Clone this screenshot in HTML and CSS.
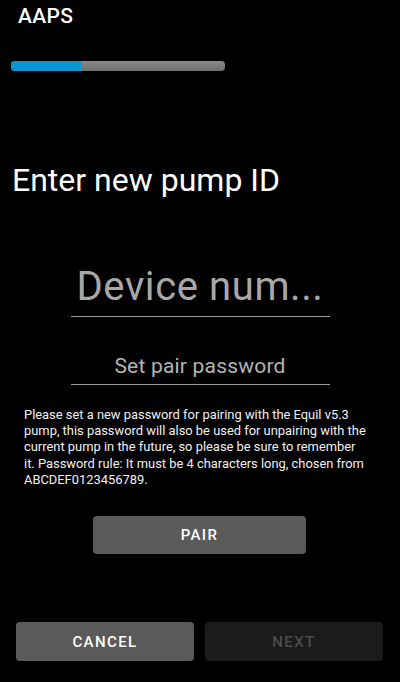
FILE: index.html
```html
<!DOCTYPE html>
<html>
<head>
<meta charset="utf-8">
<link rel="stylesheet" href="styles.css">
</head>
<body>
<div class="screen">
  <header class="appbar">AAPS</header>
  <div class="progress"><div class="progress-fill" style="width:33%"></div></div>
  <h1 class="title">Enter new pump ID</h1>
  <div class="field field-id"><span>Device num...</span></div>
  <div class="field field-pass"><span>Set pair password</span></div>
  <p class="hint">Please set a new password for pairing with the Equil v5.3 pump, this password will also be used for unpairing with the current pump in the future, so please be sure to remember it. Password rule: It must be 4 characters long, chosen from ABCDEF0123456789.</p>
  <div class="pair-row"><button class="btn btn-pair">PAIR</button></div>
  <div class="footer">
    <button class="btn btn-cancel">CANCEL</button>
    <button class="btn btn-next">NEXT</button>
  </div>
</div>
</body>
</html>
```
FILE: styles.css
```css
html, body {
  margin: 0;
  padding: 0;
  background: #000;
}
.screen {
  width: 400px;
  height: 682px;
  display: flex;
  flex-direction: column;
  font-family: Roboto, "Noto Sans", sans-serif;
  color: #fff;
}
.appbar {
  font-size: 21px;
  line-height: 24px;
  padding: 4px 0 0 18px;
  height: 28px;
  box-sizing: border-box;
  font-weight: 500;
  letter-spacing: 0.3px;
}
.progress {
  margin: 33px 0 0 11px;
  width: 214px;
  height: 10px;
  border-radius: 4px;
  background: linear-gradient(#8a8a8a, #6e6e6e);
  overflow: hidden;
}
.progress-fill {
  height: 100%;
  background: #0798d3;
}
.title {
  margin: 91px 0 0 12px;
  font-size: 32px;
  line-height: 36px;
  font-weight: 400;
}
.field {
  margin: 0 auto;
  width: 259px;
  border-bottom: 1px solid #9a9a9a;
  text-align: center;
  color: #a8a8a8;
}
.field-id {
  margin-top: 65px;
  font-size: 40px;
  line-height: 48px;
  padding-bottom: 5px;
  letter-spacing: 0.6px;
}
.field-pass {
  margin-top: 36px;
  font-size: 21px;
  line-height: 26px;
  padding-bottom: 5px;
  color: #b4b4b4;
  letter-spacing: 0.2px;
}
.hint {
  margin: 22px 31px 0 24px;
  font-size: 12.9px;
  line-height: 16.2px;
  color: #f0f0f0;
}
.pair-row {
  margin-top: 28px;
  display: flex;
  justify-content: center;
}
.btn {
  border: none;
  border-radius: 4px;
  font-family: Roboto, "Noto Sans", sans-serif;
  font-weight: 500;
  font-size: 15px;
  letter-spacing: 1.4px;
  color: #fff;
  padding: 0;
}
.btn-pair {
  width: 213px;
  height: 38px;
  background: #5a5a5a;
  margin-left: -1px;
}
.footer {
  margin-top: auto;
  padding: 0 17px 21px 16px;
  display: flex;
  gap: 11px;
}
.footer .btn {
  flex: 1;
  height: 39px;
}
.btn-cancel {
  background: #5a5a5a;
}
.btn-next {
  background: #1b1b1b;
  color: #4c4c4c;
}
```
